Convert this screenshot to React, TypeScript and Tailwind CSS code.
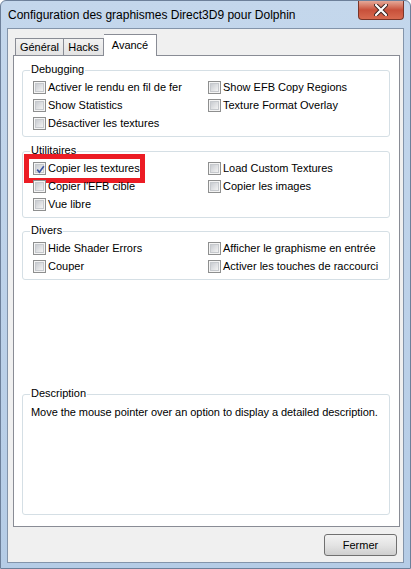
import React from 'react';

function Box({ checked }: { checked?: boolean }) {
  return (
    <span className="relative flex h-[13px] w-[13px] shrink-0 items-center justify-center border border-[#8e8f8f] bg-[#f4f4f4]">
      <span className="h-[9px] w-[9px] border border-[#c6c9cd] bg-linear-to-br from-[#c9ccd1] to-[#f3f3f3]" />
      {checked && (
        <svg className="absolute left-[1px] top-[1px]" width="11" height="11" viewBox="0 0 11 11">
          <path d="M2.2 5.6 L4.4 8.2 L8.8 2.2" fill="none" stroke="#3d56a1" strokeWidth="1.7" />
        </svg>
      )}
    </span>
  );
}

function Check({ label, checked, marked }: { label: string; checked?: boolean; marked?: boolean }) {
  return (
    <div className="relative flex h-[18px] items-center gap-[2px]">
      <Box checked={checked} />
      <span className="whitespace-nowrap leading-[13px]">{label}</span>
      {/* red annotation frame from the screenshot */}
      {marked && (
        <span className="pointer-events-none absolute left-[-9px] top-[-5px] h-[29px] w-[121px] border-[5px] border-[#ec1c24]" />
      )}
    </div>
  );
}

function Group({ title, className = '', children }: { title: string; className?: string; children: React.ReactNode }) {
  return (
    <div className={`relative rounded-[3px] border border-[#d5dfe5] ${className}`}>
      <span className="absolute left-[7px] top-[-8px] bg-white px-[1px] leading-[13px]">{title}</span>
      {children}
    </div>
  );
}

function Columns({ left, right }: { left: React.ReactNode; right: React.ReactNode }) {
  return (
    <div className="grid grid-cols-[175px_1fr] pl-[10px] pt-[7px] pb-[4px]">
      <div className="flex flex-col">{left}</div>
      <div className="flex flex-col">{right}</div>
    </div>
  );
}

export default function App() {
  return (
    <div className="flex h-[569px] w-[411px] flex-col rounded-t-[6px] border border-[#6d809a] bg-linear-to-b from-[#c4d7ec] to-[#b5cce6] font-['Liberation_Sans',Arial,sans-serif] text-[11px] text-black">
      {/* Title bar */}
      <div className="flex h-[27px] items-start">
        <span className="self-center pl-[7px] pt-[1px] text-[12px] leading-[16px]">
          Configuration des graphismes Direct3D9 pour Dolphin
        </span>
        <div className="ml-auto mr-[6px] flex h-[19px] w-[46px] items-center justify-center rounded-b-[4px] border border-t-0 border-[#7a3528] bg-linear-to-b from-[#e4a898] via-[#c8503a] to-[#d86a50]">
          <svg width="14" height="12" viewBox="0 0 14 12">
            <path d="M2 1 L12 11 M12 1 L2 11" stroke="#3a2320" strokeWidth="4" strokeLinecap="round" />
            <path d="M2 1 L12 11 M12 1 L2 11" stroke="#ffffff" strokeWidth="2.2" strokeLinecap="round" />
          </svg>
        </div>
      </div>

      {/* Client area */}
      <div className="mx-[6px] mb-[5px] flex flex-1 flex-col border border-[#8394aa] bg-[#f0f0f0] px-[5px] pt-[6px] pb-[6px] pr-[4px]">
        {/* Tabs */}
        <div className="flex h-[20px] items-end pl-[2px]">
          <div className="flex h-[17px] w-[49px] items-center justify-center border border-b-0 border-[#898c95] bg-linear-to-b from-[#f2f2f2] to-[#e3e3e3]">Général</div>
          <div className="flex h-[17px] w-[40px] items-center justify-center border border-b-0 border-l-0 border-[#898c95] bg-linear-to-b from-[#f2f2f2] to-[#e3e3e3]">Hacks</div>
          <div className="relative z-10 -mb-px flex h-[22px] w-[53px] items-start justify-center border border-b-0 border-l-0 border-[#898c95] bg-white pt-[2px]">Avancé</div>
        </div>

        {/* Panel */}
        <div className="flex w-[387px] flex-1 flex-col border border-[#898c95] bg-white px-[8px] pr-[9px]">
          <Group title="Debugging" className="mt-[14px]">
            <Columns
              left={
                <>
                  <Check label="Activer le rendu en fil de fer" />
                  <Check label="Show Statistics" />
                  <Check label="Désactiver les textures" />
                </>
              }
              right={
                <>
                  <Check label="Show EFB Copy Regions" />
                  <Check label="Texture Format Overlay" />
                </>
              }
            />
          </Group>

          <Group title="Utilitaires" className="mt-[14px]">
            <Columns
              left={
                <>
                  <Check label="Copier les textures" checked marked />
                  <Check label="Copier l'EFB cible" />
                  <Check label="Vue libre" />
                </>
              }
              right={
                <>
                  <Check label="Load Custom Textures" />
                  <Check label="Copier les images" />
                </>
              }
            />
          </Group>

          <Group title="Divers" className="mt-[13px]">
            <Columns
              left={
                <>
                  <Check label="Hide Shader Errors" />
                  <Check label="Couper" />
                </>
              }
              right={
                <>
                  <Check label="Afficher le graphisme en entrée" />
                  <Check label="Activer les touches de raccourci" />
                </>
              }
            />
          </Group>

          <Group title="Description" className="mt-auto mb-[11px] h-[121px]">
            <p className="pl-[8px] pt-[11px] leading-[13px] tracking-[-0.05px]">
              Move the mouse pointer over an option to display a detailed description.
            </p>
          </Group>
        </div>

        {/* Footer */}
        <div className="mt-[7px] flex justify-end pr-[2px]">
          <button className="h-[22px] w-[73px] rounded-[3px] border border-[#707070] bg-linear-to-b from-[#f2f2f2] via-[#e4e4e4] to-[#cfcfcf] text-[11px] leading-[13px]">
            Fermer
          </button>
        </div>
      </div>
    </div>
  );
}
